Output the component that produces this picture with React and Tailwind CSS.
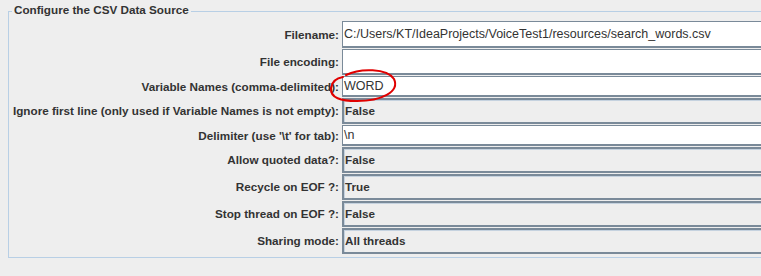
const rows = [
  { label: "Filename:", value: "C:/Users/KT/IdeaProjects/VoiceTest1/resources/search_words.csv", kind: "text", h: "h-[28px]" },
  { label: "File encoding:", value: "", kind: "text", h: "h-[27px]" },
  { label: "Variable Names (comma-delimited):", value: "WORD", kind: "text", h: "h-[22px]" },
  { label: "Ignore first line (only used if Variable Names is not empty):", value: "False", kind: "combo", h: "h-[27px]" },
  { label: "Delimiter (use '\\t' for tab):", value: "\\n", kind: "text", h: "h-[22px]" },
  { label: "Allow quoted data?:", value: "False", kind: "combo", h: "h-[27px]" },
  { label: "Recycle on EOF ?:", value: "True", kind: "combo", h: "h-[27px]" },
  { label: "Stop thread on EOF ?:", value: "False", kind: "combo", h: "h-[27px]" },
  { label: "Sharing mode:", value: "All threads", kind: "combo", h: "h-[27px]" },
];

const Field = ({ value, kind }) =>
  kind === "text" ? (
    <div className="flex-1 h-full flex items-center bg-white border border-[#7a8a99] border-b-[2px] pl-[1px] text-[12.5px] text-[#333333] font-normal whitespace-nowrap">
      {value}
    </div>
  ) : (
    <div className="flex-1 h-full flex items-center bg-[#eeeeee] border-2 border-[#7a8a99] shadow-[inset_1px_1px_0_#c5d2df] pl-[1px] text-[11.7px] font-bold text-[#333333]">
      {value}
    </div>
  );

const App = () => {
  return (
    <div
      className="relative w-[761px] h-[276px] overflow-hidden bg-[#eeeeee] text-[#333333]"
      style={{ fontFamily: '"Liberation Sans", Arial, sans-serif' }}
    >
      <div className="absolute left-[8px] top-[11px] w-[800px] h-[247px] border border-[#b8cfe5]" />
      <div className="relative pt-[2px] pl-[12px] h-[21px]">
        <span className="px-[2px] bg-[#eeeeee] text-[11.7px] font-bold text-[#333333] leading-[16px] block w-fit">
          Configure the CSV Data Source
        </span>
      </div>
      <div className="relative flex flex-col w-[800px]">
        {rows.map((r) => (
          <div key={r.label} className={`flex items-stretch ${r.h} pb-[1px]`}>
            <div className="w-[342px] shrink-0 flex items-center justify-end pr-[3px] text-[11.7px] font-bold whitespace-nowrap">
              {r.label}
            </div>
            <div className="w-[440px] shrink-0 flex">
              <Field value={r.value} kind={r.kind} />
            </div>
          </div>
        ))}
      </div>
      <svg className="absolute left-0 top-0 pointer-events-none" width="761" height="276">
        <path
          d="M346 75 C360 68 387 68 394 79 C400 92 381 101 357 101 C341 101 330 98 331 88 C332 81 337 78 343 77"
          fill="none"
          stroke="#e00000"
          strokeWidth="2"
          strokeLinecap="round"
        />
      </svg>
    </div>
  );
};

export default App;
